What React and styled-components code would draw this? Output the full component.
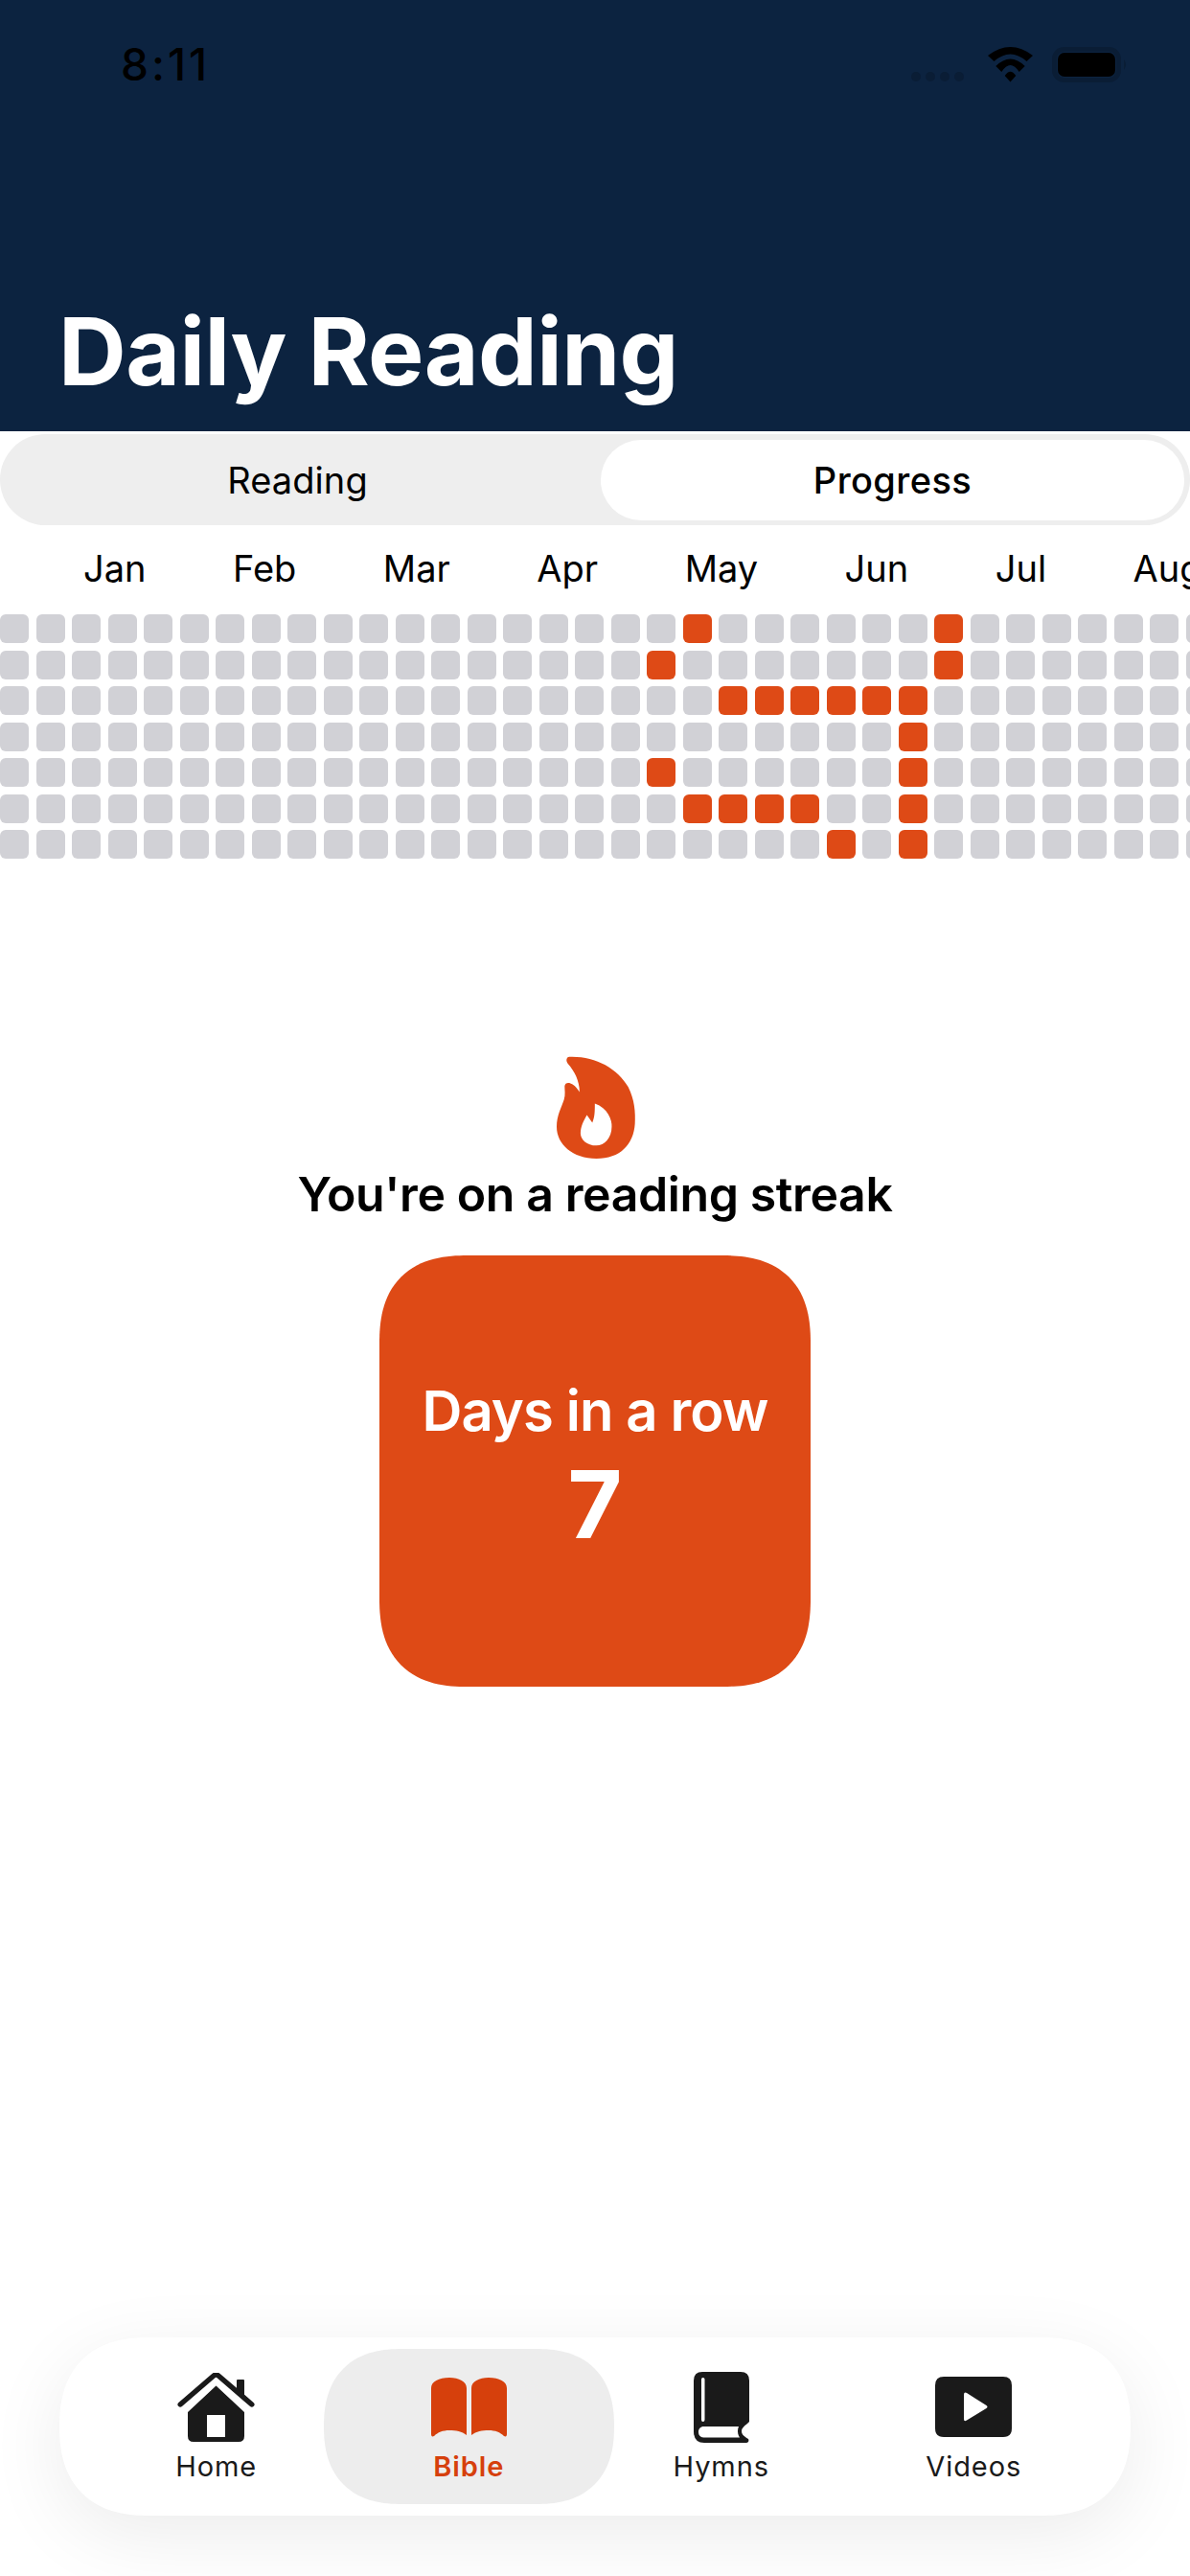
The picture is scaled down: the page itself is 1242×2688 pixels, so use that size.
import styled, { createGlobalStyle } from "styled-components";

const ORANGE = "#de4a16";
const INK = "#1a1a1a";

const months = ["Jan", "Feb", "Mar", "Apr", "May", "Jun", "Jul", "Aug"];

const read = {
  0: [19, 26],
  1: [18, 26],
  2: [20, 21, 22, 23, 24, 25],
  3: [25],
  4: [18, 25],
  5: [19, 20, 21, 22, 25],
  6: [23, 25],
};

const GlobalStyle = createGlobalStyle`
  html, body {
    margin: 0;
    padding: 0;
    background: #ffffff;
  }
  * {
    box-sizing: border-box;
  }
`;

const Page = styled.div`
  width: 1242px;
  height: 2688px;
  display: flex;
  flex-direction: column;
  overflow: hidden;
  background: #ffffff;
  font-family: "Inter", "Liberation Sans", sans-serif;
  color: #000000;
`;

const Header = styled.header`
  height: 450px;
  flex: none;
  background: #0c2340;
  display: flex;
  flex-direction: column;
  justify-content: space-between;
`;

const StatusBar = styled.div`
  height: 37px;
  margin-top: 49px;
  padding: 0 64px 0 126px;
  display: flex;
  align-items: center;
  justify-content: space-between;
`;

const Time = styled.div`
  font-size: 46px;
  font-weight: 500;
  line-height: 37px;
  letter-spacing: 3px;
  color: #000000;
`;

const StatusIcons = styled.div`
  display: flex;
  align-items: center;
  gap: 20px;
`;

const Dots = styled.div`
  display: flex;
  gap: 5px;
  align-self: flex-end;
  margin-bottom: 1px;
  margin-right: 5px;
`;

const Dot = styled.span`
  width: 10px;
  height: 10px;
  border-radius: 50%;
  background: #0a1d35;
`;

const Title = styled.h1`
  margin: 0 0 28px 61px;
  font-size: 98px;
  line-height: 110px;
  font-weight: 700;
  letter-spacing: -0.6px;
  color: #ffffff;
`;

const Segments = styled.div`
  margin-top: 3px;
  height: 95px;
  flex: none;
  padding: 6px 6px 5px;
  display: grid;
  grid-template-columns: 1fr 1fr;
  gap: 12px;
  background: #eeeeee;
  border-radius: 48px;
`;

const Segment = styled.div`
  display: flex;
  align-items: center;
  justify-content: center;
  border-radius: 42px;
  font-size: 38px;
  font-weight: ${(p) => (p.$active ? 500 : 400)};
  letter-spacing: ${(p) => (p.$active ? "0.4px" : "0.1px")};
  background: ${(p) => (p.$active ? "#ffffff" : "transparent")};
`;

const MonthRow = styled.div`
  margin-top: 22px;
  padding-left: 87px;
  display: flex;
  gap: 90.5px;
  white-space: nowrap;
`;

const Month = styled.span`
  font-size: 38px;
  line-height: 46px;
`;

const Grid = styled.div`
  margin-top: 25px;
  display: grid;
  grid-template-columns: repeat(34, 30px);
  grid-auto-rows: 30px;
  gap: 7.5px;
  flex: none;
`;

const Cell = styled.span`
  border-radius: 6px;
  background: ${(p) => (p.$on ? ORANGE : "#d1d1d6")};
`;

const Streak = styled.section`
  margin-top: 205px;
  display: flex;
  flex-direction: column;
  align-items: center;
`;

const FlameMark = styled.svg`
  margin-left: 2px;
  fill: ${ORANGE};
  fill-rule: evenodd;
`;

const StreakTitle = styled.h2`
  margin: 7px 0 0;
  font-size: 50px;
  line-height: 60px;
  font-weight: 600;
  letter-spacing: -0.4px;
`;

const Card = styled.div`
  margin-top: 34px;
  width: 450px;
  height: 450px;
  padding-top: 127px;
  border-radius: 78px;
  background: ${ORANGE};
  color: #ffffff;
  display: flex;
  flex-direction: column;
  align-items: center;

  @supports (corner-shape: squircle) {
    border-radius: 92px;
    corner-shape: superellipse(1.3);
  }
`;

const CardLabel = styled.div`
  font-size: 58px;
  line-height: 70px;
  font-weight: 600;
  letter-spacing: -0.9px;
`;

const CardValue = styled.div`
  margin-top: 4px;
  font-size: 98px;
  line-height: 118px;
  font-weight: 700;
`;

const Nav = styled.nav`
  margin: auto 62px 63px;
  height: 186px;
  flex: none;
  padding: 12px 32px;
  display: grid;
  grid-template-columns: repeat(4, 1fr);
  border-radius: 93px;
  background: #ffffff;
  box-shadow: 0 20px 80px rgba(0, 0, 0, 0.08);

  @supports (corner-shape: squircle) {
    corner-shape: superellipse(1.25);
  }
`;

const NavItem = styled.div`
  display: flex;
  flex-direction: column;
  align-items: center;
  border-radius: 81px;
  margin: ${(p) => (p.$active ? "0 -20px" : "0")};
  background: ${(p) => (p.$active ? "#ededed" : "transparent")};
  color: ${(p) => (p.$active ? "#d6400c" : INK)};

  @supports (corner-shape: squircle) {
    corner-shape: superellipse(1.25);
  }
`;

const IconSlot = styled.div`
  height: 91px;
  display: flex;
  align-items: center;
  justify-content: center;
  flex: none;
  margin-top: 15px;
`;

const NavLabel = styled.span`
  font-size: 29px;
  line-height: 34px;
  letter-spacing: 0.9px;
  font-weight: ${(p) => (p.$active ? 600 : 400)};
`;

function Wifi() {
  return (
    <svg width="47" height="37" viewBox="0 0 47 37" fill="#000">
      <path d="M0 9 Q23.5 -9 47 9 L40.5 15 Q23.5 0 6.5 15 Z" />
      <path d="M8.3 20 Q23.5 5 38.7 20 L32.7 26 Q23.5 12 14.3 26 Z" />
      <path d="M17.7 30 Q23.5 21.4 29.3 30 L23.5 36.5 Z" />
    </svg>
  );
}

function Battery() {
  return (
    <svg width="80" height="37" viewBox="0 0 80 37">
      <rect x="2.5" y="2.5" width="67" height="32" rx="10" fill="none" stroke="#0a1d35" strokeWidth="5" />
      <rect x="6" y="6" width="60" height="25" rx="7" fill="#000" />
      <path d="M75 13 Q79 18.5 75 24 Z" fill="#0a1d35" />
    </svg>
  );
}

function Flame() {
  return (
    <FlameMark width="83" height="108" viewBox="120 60 250 325">
      <path d="M160 65 C240 62 310 100 345 160 C365 200 368 240 366 275 C362 340 320 385 245 385 C170 385 120 340 120 285 C120 250 135 225 143 200 C148 185 145 170 145 158 C146 145 160 145 170 152 C180 158 188 170 192 176 C192 140 175 110 156 88 C148 78 150 66 160 65 Z M240 212 C240 235 240 255 232 272 L215 248 C205 265 195 285 195 305 C195 325 215 344 245 344 C270 344 293 320 293 285 C295 265 280 225 240 212 Z" />
    </FlameMark>
  );
}

function HomeIcon() {
  return (
    <svg width="81" height="72" viewBox="0 0 81 72" fill="currentColor" fillRule="evenodd">
      <path d="M40.5 13.5 L70 41 V66 Q70 72 64 72 H17 Q11 72 11 66 V41 Z M31 44 V67 H50 V44 Z" />
      <path d="M62 8 Q62 7 63 7 H69 Q70 7 70 8 V24 L62 17 Z" />
      <path d="M3.2 33 L38 3 Q40.5 1 43 3 L77.8 33" fill="none" stroke="currentColor" strokeWidth="5.4" strokeLinecap="round" strokeLinejoin="round" />
    </svg>
  );
}

function BibleIcon() {
  return (
    <svg width="79" height="62" viewBox="0 0 79 62" fill="currentColor">
      <path d="M0 11 C0 4 8 0 19 0 C29 0 37 4 37 11 V60 C32 56 26 55 19 55 C12 55 7 57 3 61 C1 62 0 61 0 59 Z" />
      <path d="M79 11 C79 4 71 0 60 0 C50 0 42 4 42 11 V60 C47 56 53 55 60 55 C67 55 72 57 76 61 C78 62 79 61 79 59 Z" />
    </svg>
  );
}

function HymnsIcon() {
  return (
    <svg width="58" height="74" viewBox="0 0 58 74" fill="currentColor" fillRule="evenodd">
      <path d="M9 0 H49 Q58 0 58 9 V52 C54 56 50 58 50 62 C50 66 54 68 57 70 C58 72 57 74 55 74 H11 Q0 74 0 62 V9 Q0 0 9 0 Z M9.7 6 Q8 6 8 7.7 V50 Q8 52 9.7 52 Q11.5 52 11.5 50 V7.7 Q11.5 6 9.7 6 Z M10.5 57 H47 C45.5 60 45.5 65 48 68.5 H10.5 C7 68.5 5 66 5 62.7 C5 59.5 7 57 10.5 57 Z" />
    </svg>
  );
}

function VideosIcon() {
  return (
    <svg width="80" height="63" viewBox="0 0 80 63" fill="currentColor" fillRule="evenodd">
      <path d="M9 0 H71 Q80 0 80 9 V54 Q80 63 71 63 H9 Q0 63 0 54 V9 Q0 0 9 0 Z M30 19 V44 Q30 47.5 33 45.5 L53.5 33 Q55.5 31.5 53.5 30 L33 17 Q30 15.5 30 19 Z" />
    </svg>
  );
}

const tabs = [
  { label: "Home", Icon: HomeIcon },
  { label: "Bible", Icon: BibleIcon, active: true },
  { label: "Hymns", Icon: HymnsIcon },
  { label: "Videos", Icon: VideosIcon },
];

export default function App() {
  const cells = [];
  for (let row = 0; row < 7; row++) {
    for (let col = 0; col < 34; col++) {
      cells.push(<Cell key={`${row}-${col}`} $on={read[row].includes(col)} />);
    }
  }

  return (
    <Page>
      <GlobalStyle />
      <Header>
        <StatusBar>
          <Time>8:11</Time>
          <StatusIcons>
            <Dots>
              <Dot />
              <Dot />
              <Dot />
              <Dot />
            </Dots>
            <Wifi />
            <Battery />
          </StatusIcons>
        </StatusBar>
        <Title>Daily Reading</Title>
      </Header>

      <Segments>
        <Segment>Reading</Segment>
        <Segment $active>Progress</Segment>
      </Segments>

      <MonthRow>
        {months.map((m) => (
          <Month key={m}>{m}</Month>
        ))}
      </MonthRow>

      <Grid>{cells}</Grid>

      <Streak>
        <Flame />
        <StreakTitle>You're on a reading streak</StreakTitle>
        <Card>
          <CardLabel>Days in a row</CardLabel>
          <CardValue>7</CardValue>
        </Card>
      </Streak>

      <Nav>
        {tabs.map(({ label, Icon, active }) => (
          <NavItem key={label} $active={active}>
            <IconSlot>
              <Icon />
            </IconSlot>
            <NavLabel $active={active}>{label}</NavLabel>
          </NavItem>
        ))}
      </Nav>
    </Page>
  );
}
